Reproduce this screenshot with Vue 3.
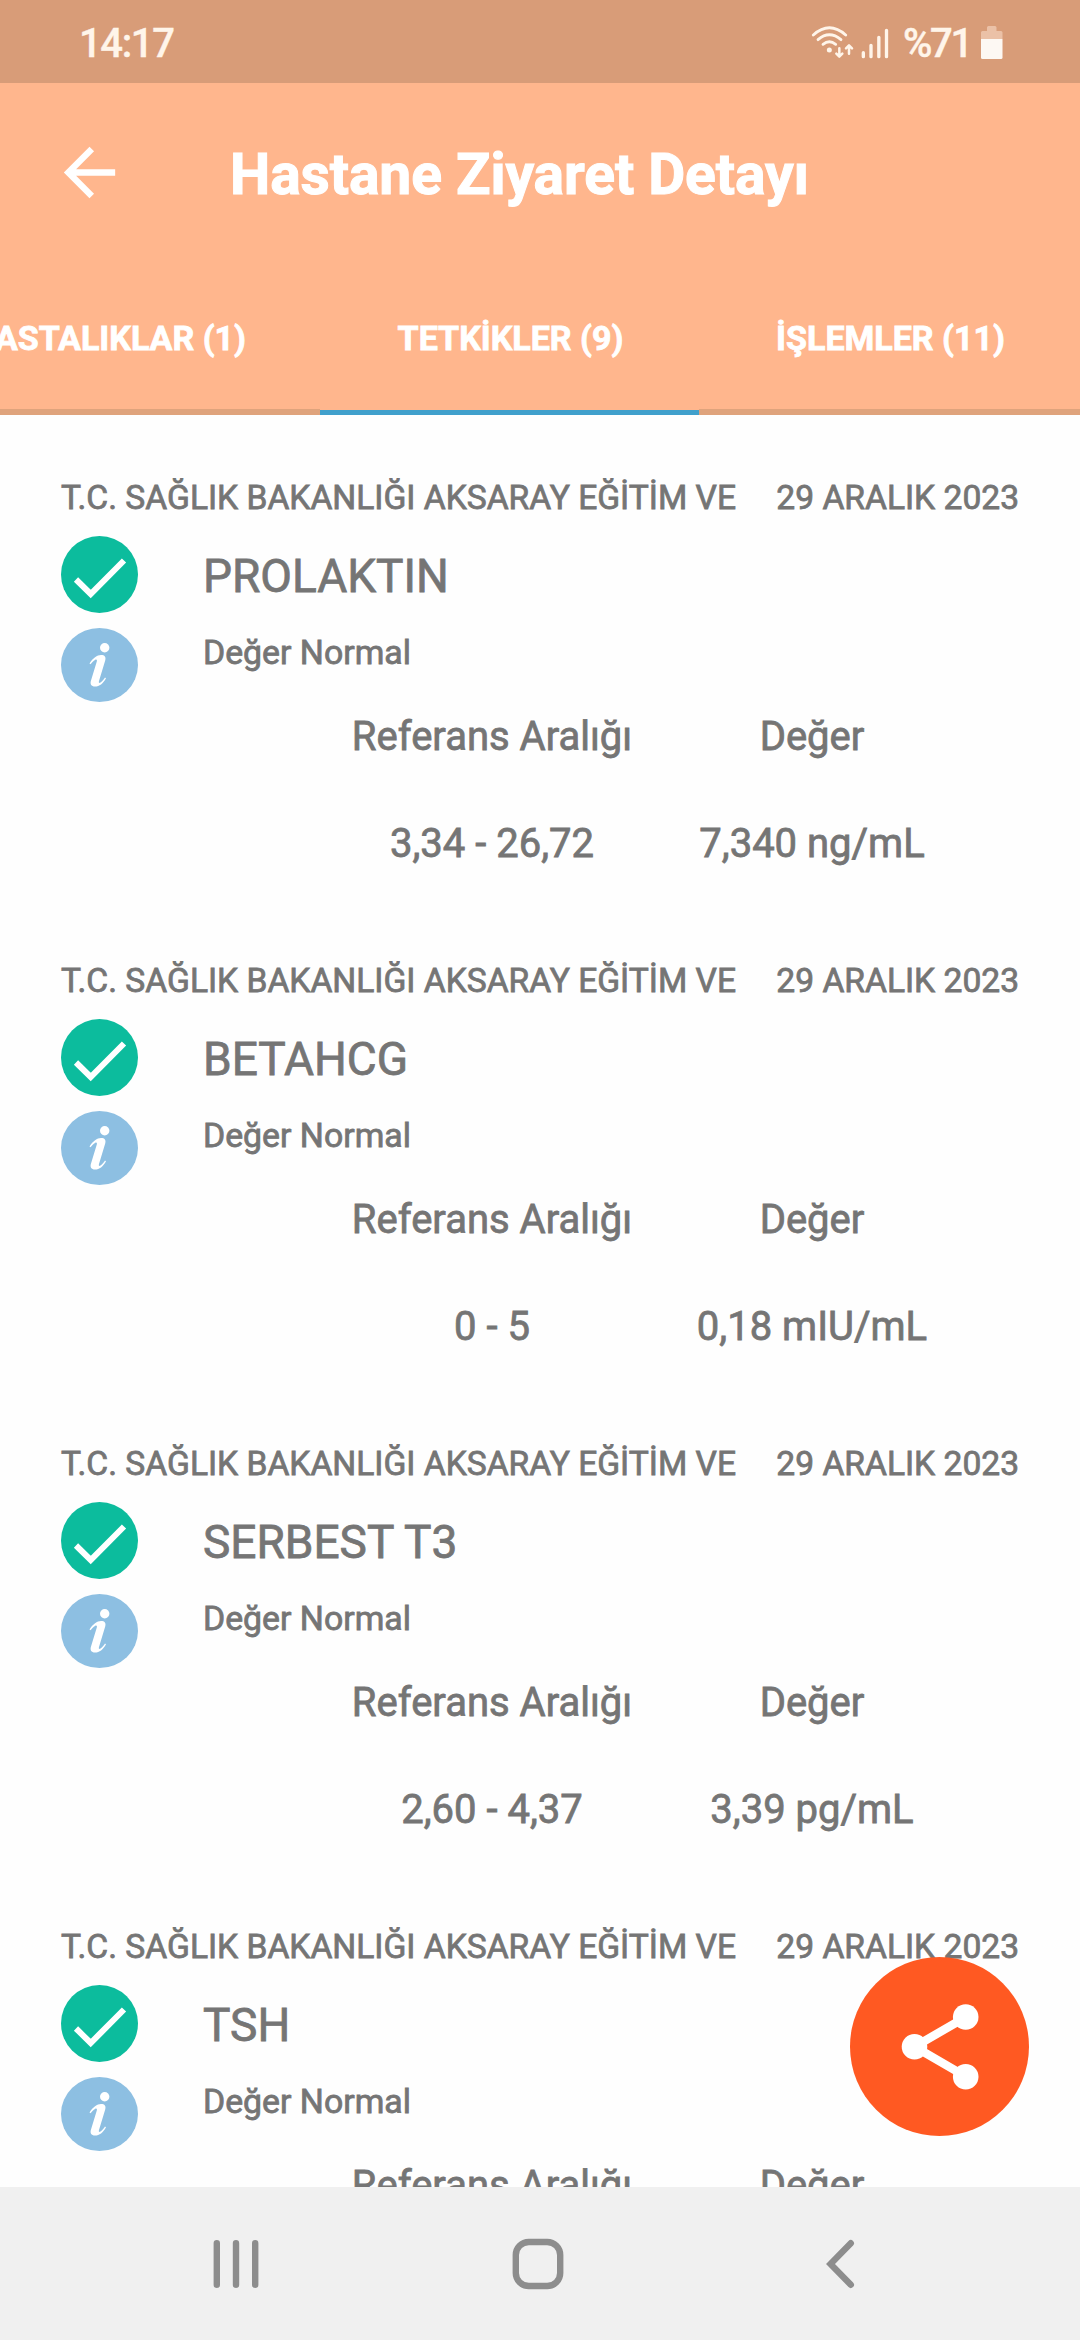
<script setup>
const tabs = [
  { label: 'HASTALIKLAR (1)', kind: 'first' },
  { label: 'TETKİKLER (9)', kind: 'active' },
  { label: 'İŞLEMLER (11)', kind: 'last' },
]

const hospital = 'T.C. SAĞLIK BAKANLIĞI AKSARAY EĞİTİM VE'
const date = '29 ARALIK 2023'
const results = [
  { name: 'PROLAKTIN', range: '3,34 - 26,72', value: '7,340 ng/mL' },
  { name: 'BETAHCG', range: '0 - 5', value: '0,18 mIU/mL' },
  { name: 'SERBEST T3', range: '2,60 - 4,37', value: '3,39 pg/mL' },
  { name: 'TSH', range: '', value: '' },
]
</script>

<template>
  <div class="screen">
    <div class="status">
      <span class="clock">14:17</span>
      <svg class="signals" viewBox="150 72 240 108" width="80" height="36" fill="none" stroke="#fff5ea" stroke-linecap="round">
        <g stroke-width="8.5">
          <path d="M160 105Q208 62 257 105" />
          <path d="M174 119Q208 90 243 119" />
          <path d="M189 133Q208 118 227 133" />
        </g>
        <circle cx="208" cy="150" r="7.5" fill="#fff5ea" stroke="none" />
        <path stroke-width="7.5" stroke-linejoin="round" d="M238 145V169M229 161L238 170L247 161M267 161V137M258 145L267 136L276 145" />
        <path stroke-width="10" d="M310 158V170M333 136V170M356.500 112V170M379.500 91V170" />
      </svg>
      <span class="percent">%71</span>
      <svg class="battery" viewBox="0 0 22 33" width="22" height="33">
        <path fill="#fbe0cd" opacity=".55" d="M6 5V1.500Q6 0 7.500 0H14Q15.500 0 15.500 1.500V5H20Q21.500 5 21.500 6.500V13H0V6.500Q0 5 1.500 5Z" />
        <path fill="#fdf8f3" d="M0 13H21.500V31.500Q21.500 33 20 33H1.500Q0 33 0 31.500Z" />
      </svg>
    </div>

    <header class="bar">
      <svg class="back" viewBox="0 0 24 24" width="77" height="77">
        <path fill="#fff" d="M20 11H7.830l5.590-5.590L12 4l-8 8 8 8 1.410-1.410L7.830 13H20v-2z" />
      </svg>
      <h1>Hastane Ziyaret Detayı</h1>
    </header>

    <nav class="tabs">
      <div v-for="t in tabs" :key="t.label" class="tab" :class="t.kind"><span>{{ t.label }}</span></div>
    </nav>

    <main class="list">
      <article v-for="r in results" :key="r.name" class="item">
        <div class="source">
          <span class="hospital">{{ hospital }}</span>
          <span class="date">{{ date }}</span>
        </div>
        <div class="body">
          <div class="marks">
            <svg viewBox="0 0 77 77" width="77" height="77">
              <circle cx="38.500" cy="38.500" r="38.500" fill="#0cbc9d" />
              <path d="M15 43.500L29.700 58L63 24.500" fill="none" stroke="#fff" stroke-width="6" />
            </svg>
            <svg viewBox="0 0 77 74" width="77" height="74">
              <ellipse cx="38.500" cy="37" rx="38.500" ry="37" fill="#8dbfe2" />
              <circle cx="43.700" cy="19.700" r="4.700" fill="#fff" />
              <path fill="#fff" d="M28.500 35.500C32 30 36 27 40 27C43.800 27 45.200 29 44.200 32.500L38 53C37.500 55 38.200 55.500 39.500 54.500C41.300 53.200 42.700 51.500 44 49.500L45 50.200C42 55.500 38.500 58.500 34 58.500C30.300 58.500 28.800 56.300 30 52.500L35.800 33.500C36.300 31.800 35.500 31 34 31.900C32.500 32.800 31 34.300 29.500 36.200Z" />
            </svg>
          </div>
          <div class="info">
            <div class="name">{{ r.name }}</div>
            <div class="state">Değer Normal</div>
            <div class="table">
              <span class="head">Referans Aralığı</span>
              <span class="head">Değer</span>
              <span class="cell">{{ r.range }}</span>
              <span class="cell">{{ r.value }}</span>
            </div>
          </div>
        </div>
      </article>
    </main>

    <button class="share" aria-label="Paylaş">
      <svg viewBox="0 0 179 179" width="179" height="179" fill="#fff">
        <path d="M116 60L64.500 89.700L116 119.700" fill="none" stroke="#fff" stroke-width="8.500" />
        <circle cx="64.500" cy="89.700" r="12.800" />
        <circle cx="115.700" cy="60" r="12.800" />
        <circle cx="115.700" cy="119.700" r="12.800" />
      </svg>
    </button>

    <footer class="keys">
      <svg viewBox="0 0 60 60" width="60" height="60"><path d="M10.800 9.200V50.800M30 9.200V50.800M49.200 9.200V50.800" /></svg>
      <svg viewBox="0 0 60 60" width="60" height="60"><rect x="7.800" y="8" width="44.400" height="44" rx="13" /></svg>
      <svg viewBox="0 0 60 60" width="60" height="60"><path d="M40.800 9.200L20.500 30L40.800 50.800" /></svg>
    </footer>
  </div>
</template>

<style>
body {
  margin: 0;
  background: #fff;
}
</style>

<style scoped>
.screen {
  position: relative;
  display: flex;
  flex-direction: column;
  width: 1080px;
  height: 2340px;
  overflow: hidden;
  background: #fefefe;
  color: #757575;
  font-family: Roboto, sans-serif;
}
.status {
  display: flex;
  align-items: flex-start;
  flex: none;
  height: 83px;
  padding-left: 79px;
  box-sizing: border-box;
  background: #d89c78;
  color: #fff5ea;
  font-size: 40px;
  font-weight: 500;
  line-height: 48px;
  letter-spacing: -1.4px;
  -webkit-text-stroke: 0.4px #fff5ea;
}
.clock {
  width: 731px;
  margin-top: 20px;
}
.signals {
  margin-top: 24px;
}
.percent {
  width: 78px;
  margin: 20px 0 0 13px;
  letter-spacing: -2.4px;
}
.battery {
  margin-top: 26px;
}
.bar {
  display: flex;
  align-items: center;
  flex: none;
  height: 179px;
  padding-left: 51px;
  background: #ffb68d;
}
h1 {
  margin: 4px 0 0 102px;
  color: #fff;
  font-size: 57px;
  font-weight: 700;
  line-height: 68px;
  letter-spacing: -0.1px;
  white-space: nowrap;
  -webkit-text-stroke: 1px #fff;
}
.tabs {
  display: flex;
  flex: none;
  height: 153px;
  background: #ffb68d;
  color: #fff;
  font-size: 34px;
  font-weight: 700;
  white-space: nowrap;
  -webkit-text-stroke: 0.8px #fff;
}
.tab {
  display: flex;
  justify-content: center;
  flex: none;
  width: 379px;
  height: 153px;
  box-sizing: border-box;
  border-bottom: 6px solid #dfa37c;
  line-height: 153px;
}
.first {
  width: 320px;
  justify-content: flex-end;
  padding-right: 74px;
}
.active {
  border-bottom: 5px solid #40a0cc;
  padding-left: 2px;
}
.last {
  width: 381px;
  padding-left: 2px;
}
.list {
  flex: 1;
  min-height: 0;
  padding-top: 63px;
  overflow: hidden;
  -webkit-text-stroke: 0.8px #757575;
}
.item {
  height: 483px;
}
.source {
  display: flex;
  justify-content: space-between;
  padding: 0 61px;
  font-size: 33.6px;
  line-height: 40px;
  white-space: nowrap;
}
.body {
  display: flex;
  margin-top: 18px;
  padding-left: 61px;
}
.marks {
  display: flex;
  flex-direction: column;
  gap: 15px;
  width: 77px;
}
.info {
  margin-left: 65px;
}
.name {
  font-size: 46px;
  line-height: 80px;
}
.state {
  font-size: 33.8px;
  line-height: 74px;
}
.table {
  display: grid;
  grid-template-columns: 320px 320px;
  margin-left: 129px;
  font-size: 40px;
  text-align: center;
}
.head {
  line-height: 94px;
}
.cell {
  line-height: 120px;
}
.share {
  position: absolute;
  right: 51px;
  bottom: 204px;
  width: 179px;
  height: 179px;
  padding: 0;
  border: 0;
  border-radius: 50%;
  background: #ff5922;
}
.share svg {
  display: block;
}
.keys {
  display: grid;
  grid-template-columns: repeat(3, 302px);
  align-items: center;
  justify-items: center;
  flex: none;
  height: 153px;
  padding-left: 85px;
  background: #f0f0f0;
}
.keys svg {
  fill: none;
  stroke: #8d8d8d;
  stroke-width: 6.4;
  stroke-linecap: round;
}
</style>
